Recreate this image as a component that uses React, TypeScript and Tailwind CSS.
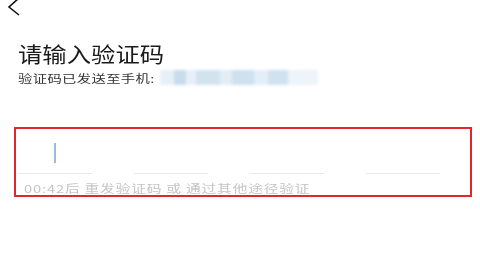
import React from "react";

const font = { fontFamily: '"Noto Sans CJK SC", "Noto Sans", sans-serif' };

function PhoneMask() {
  // blurred phone number, drawn as soft blue blocks
  const blocks = [
    { w: "w-[14px]", c: "bg-[#e6f0f8]" },
    { w: "w-[12px]", c: "bg-[#c9dcec]" },
    { w: "w-[10px]", c: "bg-[#e6f0f8]" },
    { w: "w-[24px]", c: "bg-[#d2e3f0]" },
    { w: "w-[12px]", c: "bg-[#e2edf6]" },
    { w: "w-[22px]", c: "bg-[#cfe0ee]" },
    { w: "w-[14px]", c: "bg-[#e4eef7]" },
    { w: "w-[20px]", c: "bg-[#d0e1ef]" },
    { w: "w-[30px]", c: "bg-[#edf4fa]" },
  ];
  return (
    <div className="absolute left-[160px] top-[70px] flex h-[15px] blur-[1.5px]">
      {blocks.map((b, i) => (
        <span key={i} className={`${b.w} ${b.c} h-full`} />
      ))}
    </div>
  );
}

export default function App() {
  const cells = [0, 1, 2, 3];

  return (
    <div className="relative w-[480px] h-[270px] bg-white overflow-hidden" style={font}>
      <svg width="24" height="16" viewBox="0 0 24 16" className="ml-[2px] block">
        <path d="M17 -2 L7 7 L17 15" fill="none" stroke="#111" strokeWidth="1.6" />
      </svg>

      <div className="pl-[18px] pt-[25px]">
        <h1 className="origin-left scale-x-[1.16] text-[21px] leading-[24px] text-[#1a1a1a] font-normal">
          请输入验证码
        </h1>
        <div className="mt-[6px] flex items-center">
          <span className="origin-left scale-x-[1.3] text-[11px] leading-[14px] tracking-[0.3px] text-[#333]">
            验证码已发送至手机:
          </span>
        </div>
      </div>
      <PhoneMask />

      <div className="mx-[14px] mt-[42px] h-[70px] w-[458px] border-2 border-[#e3262b]">
        <div className="flex gap-[42px] pl-[2px]">
          {cells.map((i) => (
            <div key={i} className="flex h-[45px] w-[74px] items-center justify-center border-b border-[#e8e8e8]">
              {i === 0 && <span className="mt-[4px] h-[20px] w-[2px] bg-[#9fbcd6]" />}
            </div>
          ))}
        </div>
        <p className="mt-[7px] pl-[6px] origin-left scale-x-[1.34] text-[11px] leading-[14px] tracking-[0.6px] text-[#c4c4c4]">
          00:42后 重发验证码 或 通过其他途径验证
        </p>
      </div>
    </div>
  );
}
